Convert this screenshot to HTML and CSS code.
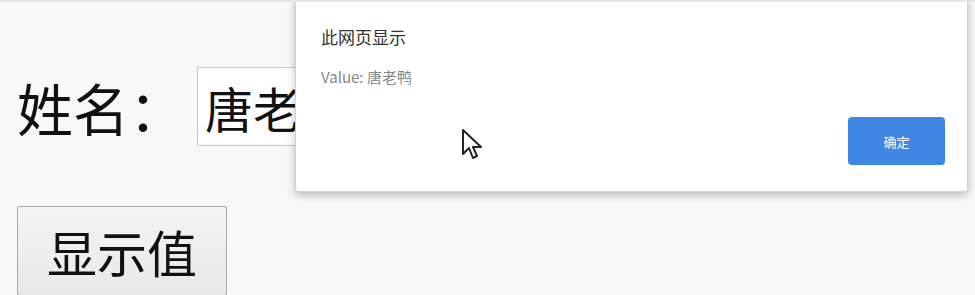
FILE: index.html
```html
<!DOCTYPE html>
<html lang="zh-CN">
<head>
    <meta charset="UTF-8">
    <title>显示值</title>
    <link rel="stylesheet" href="styles.css">
</head>
<body>
    <div class="page">
        <div class="row">
            <label class="name" for="uname">姓名：</label>
            <input id="uname" class="field" type="text" value="唐老鸭">
        </div>
        <button class="show">显示值</button>
    </div>

    <div class="dialog">
        <h3 class="title">此网页显示</h3>
        <p class="msg">Value: 唐老鸭</p>
        <div class="actions">
            <button class="ok">确定</button>
        </div>
    </div>

    <svg class="cursor" width="24" height="34" viewBox="0 0 24 34">
        <path d="M2 2 L2 26 L8 20 L12 30 L16 28 L12 19 L20 19 Z" fill="#fff" stroke="#222" stroke-width="2" stroke-linejoin="round"/>
    </svg>
</body>
</html>
```

FILE: styles.css
```css
body{
    margin: 0;
    height: 100vh;
    background: #f8f8f8;
    border-top: 2px solid #e6e6e6;
    box-sizing: border-box;
    overflow: hidden;
    font-family: "Noto Sans CJK SC", "Liberation Sans", sans-serif;
    color: #111;
    position: relative;
}
.page{
    padding: 65px 0 0 17px;
}
.row{
    display: flex;
    align-items: center;
}
.name{
    font-size: 56px;
    line-height: 1;
    margin-right: 12px;
}
.field{
    width: 300px;
    height: 79px;
    box-sizing: border-box;
    border: 1px solid #c8c8c8;
    background: #fff;
    padding: 0 7px;
    font-family: inherit;
    font-size: 48px;
    color: #111;
    outline: none;
}
.show{
    margin-top: 60px;
    width: 210px;
    height: 90px;
    border: 1px solid #a9a9a9;
    border-radius: 2px;
    background: linear-gradient(#f4f4f4, #e8e8e8);
    font-family: inherit;
    font-size: 50px;
    line-height: 1;
    color: #111;
    padding: 0;
}

/* alert */
.dialog{
    position: absolute;
    left: 295px;
    top: -6px;
    width: 673px;
    height: 196px;
    box-sizing: border-box;
    background: #fff;
    border: 1px solid #d0d0d0;
    border-radius: 3px;
    box-shadow: 0 3px 8px rgba(0, 0, 0, 0.25);
    padding: 28px 22px 0 25px;
}
.title{
    margin: 0;
    font-size: 17px;
    font-weight: normal;
    line-height: 24px;
    color: #333;
}
.msg{
    margin: 18px 0 0;
    font-size: 15px;
    line-height: 20px;
    color: #888;
}
.actions{
    display: flex;
    justify-content: flex-end;
    margin-top: 30px;
}
.ok{
    width: 97px;
    height: 48px;
    border: none;
    border-radius: 4px;
    background: #3f87e3;
    color: #fff;
    font-family: inherit;
    font-size: 13px;
}
.cursor{
    position: absolute;
    left: 461px;
    top: 126px;
}
```
